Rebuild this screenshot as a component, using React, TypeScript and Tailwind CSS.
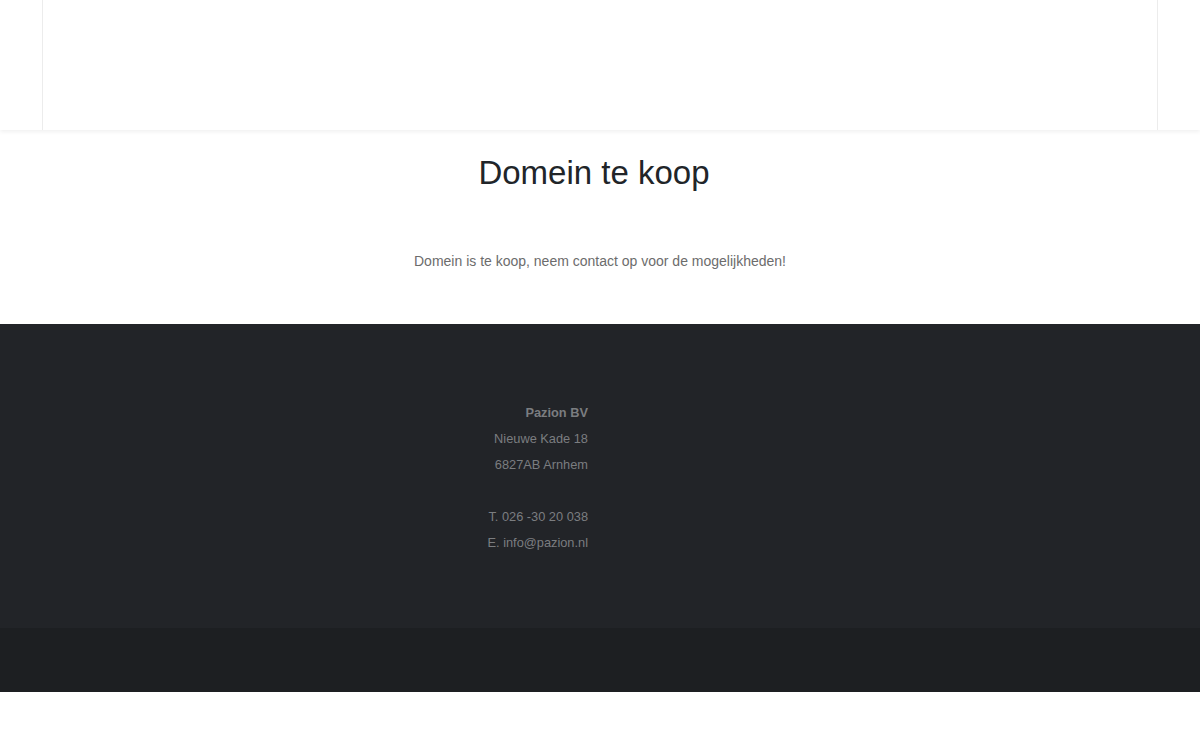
import React from 'react'

const address = [
  { text: 'Pazion BV', bold: true },
  { text: 'Nieuwe Kade 18' },
  { text: '6827AB Arnhem' },
  { text: '' },
  { text: 'T. 026 -30 20 038' },
  { text: 'E. info@pazion.nl' },
]

export default function App() {
  return (
    <div className="min-h-[740px] bg-white" style={{ fontFamily: '"Liberation Sans", Arial, sans-serif' }}>
      {/* Header */}
      <header className="relative z-10 h-[130px] bg-white shadow-[0_2px_4px_rgba(0,0,0,0.06)]">
        <div className="mx-[42px] h-full border-x border-[#ececec]" />
      </header>

      {/* Content */}
      <main className="flex flex-col items-center pt-[23px] pb-[53px]">
        <h1 className="mr-[12px] text-[33px] leading-[40px] text-[#212529]">Domein te koop</h1>
        <p className="mt-[58px] text-[14px] leading-[20px] text-[#6c6c6c]">
          Domein is te koop, neem contact op voor de mogelijkheden!
        </p>
      </main>

      {/* Footer */}
      <footer className="bg-[#222428]">
        <div className="flex h-[304px] pt-[76px]">
          <div className="w-[588px] text-right text-[12.8px] leading-[26px] text-[#7b7d80]">
            {address.map((line, i) => (
              <div key={i} className={line.bold ? 'font-bold' : ''}>
                {line.text || '\u00a0'}
              </div>
            ))}
          </div>
        </div>
        <div className="h-[64px] bg-[#1d1f22]" />
      </footer>
    </div>
  )
}
